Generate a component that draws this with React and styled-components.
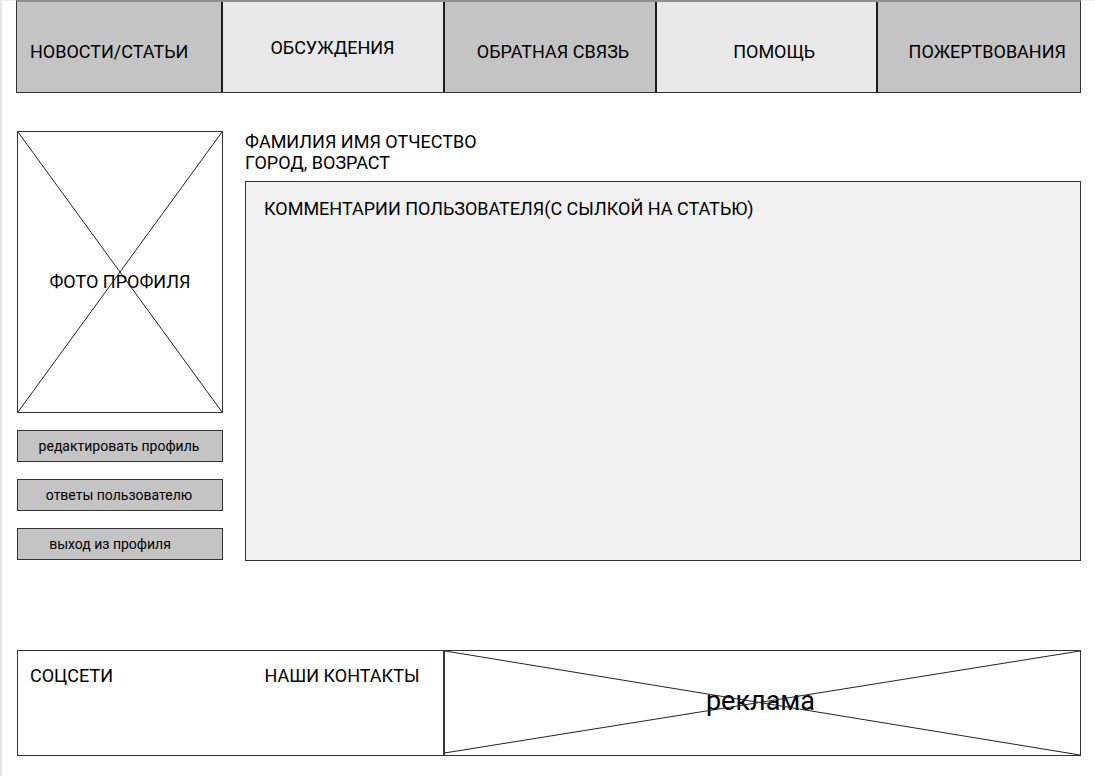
import React from "react";
import styled, { createGlobalStyle } from "styled-components";

const GlobalStyle = createGlobalStyle`
  *, *::before, *::after { box-sizing: border-box; }
  body { margin: 0; background: #fff; }
  #root { min-height: 100vh; display: flex; }
  body, button { font-family: Roboto, "Liberation Sans", sans-serif; color: #000; }
`;

const LINE = "#333";
const GREY = "#c4c4c4";
const LIGHT = "#e8e8e8";

const Page = styled.div`
  flex: 1;
  min-height: 100vh;
  padding: 0 14px 20px;
  border-left: 2px solid #e5e5e5;
  border-top: 1px solid #eee;
  font-size: 18px;
  line-height: 21px;
`;

const Nav = styled.nav`
  display: grid;
  grid-template-columns: 204fr 222fr 212fr 221fr 204fr;
  height: 93px;
  margin-top: -1px;
  border: 1px solid ${LINE};
  border-top: 2px solid #8f8f8f;
`;

const NavLink = styled.a`
  display: flex;
  justify-content: ${(p) => p.$align || "center"};
  align-items: center;
  padding: ${(p) => (p.$raised ? 0 : 8)}px ${(p) => p.$end ?? 14}px 0 13px;
  background: ${(p) => (p.$light ? LIGHT : GREY)};
  color: inherit;
  text-decoration: none;
  white-space: nowrap;
  & + & { border-left: 2px solid #1c1c1c; }
`;

const Main = styled.main`
  display: grid;
  grid-template-columns: 206px 1fr;
  column-gap: 22px;
  margin: 38px 0 0 1px;
`;

const Sidebar = styled.aside`
  display: flex;
  flex-direction: column;
  gap: 17px;
`;

const Placeholder = styled.div`
  position: relative;
  display: flex;
  align-items: center;
  justify-content: center;
  border: 1px solid ${LINE};
`;

const Photo = styled(Placeholder)`
  height: 282px;
  padding-top: 18px;
`;

const Cross = styled.svg`
  position: absolute;
  inset: 0;
  width: 100%;
  height: 100%;
  stroke: #222;
`;

const SideButton = styled.button`
  height: 32px;
  padding: 0 ${(p) => p.$end || 2}px 0 0;
  border: 1px solid ${LINE};
  border-radius: 0;
  background: ${GREY};
  font-size: 14px;
  line-height: 16px;
  cursor: pointer;
`;

const Profile = styled.section`
  display: flex;
  flex-direction: column;
`;

const Name = styled.h1`
  margin: 0;
  font-size: inherit;
  font-weight: 400;
`;

const Details = styled.p`
  margin: 0 0 8px;
`;

const Comments = styled.section`
  flex: 1;
  min-height: 380px;
  padding: 16px 18px;
  border: 1px solid ${LINE};
  background: #f0f0f0;
`;

const Heading = styled.h2`
  margin: 0;
  font-size: inherit;
  font-weight: 400;
`;

const Footer = styled.footer`
  display: grid;
  grid-template-columns: 427fr 637fr;
  height: 106px;
  margin: 89px 0 0 1px;
`;

const FooterInfo = styled.div`
  display: grid;
  grid-template-columns: 234fr 178fr;
  padding: 14px 0 0 12px;
  border: 1px solid ${LINE};
`;

const Ad = styled(Placeholder)`
  padding: 0 4px 4px 0;
  font-size: 27px;
  line-height: 32px;
`;

const CrossLines = ({ start = "100%" }) => (
  <Cross aria-hidden="true">
    <line x1="0" y1="0" x2="100%" y2="100%" />
    <line x1="0" y1={start} x2="100%" y2="0" />
  </Cross>
);

export default function App() {
  return (
    <>
      <GlobalStyle />
      <Page>
        <Nav>
          <NavLink href="#news" $align="flex-start">НОВОСТИ/СТАТЬИ</NavLink>
          <NavLink href="#talks" $light $raised>ОБСУЖДЕНИЯ</NavLink>
          <NavLink href="#feedback" $align="flex-end" $end={26}>ОБРАТНАЯ СВЯЗЬ</NavLink>
          <NavLink href="#help" $light $align="flex-end" $end={61}>ПОМОЩЬ</NavLink>
          <NavLink href="#donate" $align="flex-end">ПОЖЕРТВОВАНИЯ</NavLink>
        </Nav>
        <Main>
          <Sidebar>
            <Photo>
              <CrossLines />
              <span>ФОТО ПРОФИЛЯ</span>
            </Photo>
            <SideButton type="button">редактировать профиль</SideButton>
            <SideButton type="button">ответы пользователю</SideButton>
            <SideButton type="button" $end={20}>выход из профиля</SideButton>
          </Sidebar>
          <Profile>
            <Name>ФАМИЛИЯ ИМЯ ОТЧЕСТВО</Name>
            <Details>ГОРОД, ВОЗРАСТ</Details>
            <Comments>
              <Heading>КОММЕНТАРИИ ПОЛЬЗОВАТЕЛЯ(С СЫЛКОЙ НА СТАТЬЮ)</Heading>
            </Comments>
          </Profile>
        </Main>
        <Footer>
          <FooterInfo>
            <Heading>СОЦСЕТИ</Heading>
            <Heading>НАШИ КОНТАКТЫ</Heading>
          </FooterInfo>
          <Ad>
            <CrossLines start="98%" />
            <span>реклама</span>
          </Ad>
        </Footer>
      </Page>
    </>
  );
}
